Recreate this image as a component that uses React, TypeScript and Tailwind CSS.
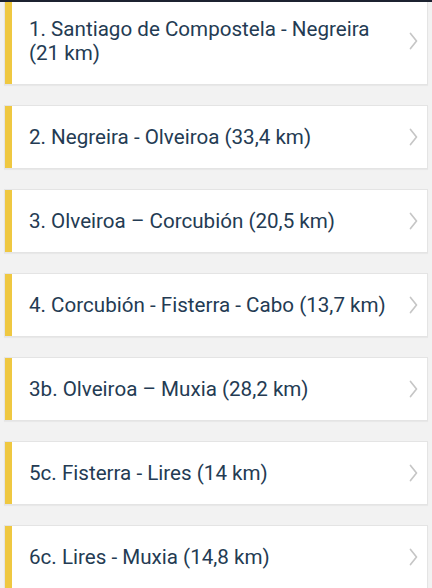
const stages = [
  "1. Santiago de Compostela - Negreira (21 km)",
  "2. Negreira - Olveiroa (33,4 km)",
  "3. Olveiroa – Corcubión (20,5 km)",
  "4. Corcubión - Fisterra - Cabo (13,7 km)",
  "3b. Olveiroa – Muxia (28,2 km)",
  "5c. Fisterra - Lires (14 km)",
  "6c. Lires - Muxia (14,8 km)",
];

function Chevron() {
  return (
    <svg width="9" height="18" viewBox="0 0 9 18" fill="none" className="shrink-0">
      <polyline
        points="1.5,1.5 7.5,9 1.5,16.5"
        stroke="#c6c6c6"
        strokeWidth="1.7"
        strokeLinecap="round"
        strokeLinejoin="round"
      />
    </svg>
  );
}

export default function App() {
  return (
    <div className="relative h-[588px] w-[432px] overflow-hidden bg-[#f2f2f2] font-['Roboto',sans-serif]">
      <div className="absolute left-0 right-0 top-0 z-10 h-[2px] bg-[#1c2230]" />
      <div className="-mt-[3px] flex flex-col gap-[20px] px-[4px]">
        {stages.map((s) => (
          <div
            key={s}
            className="flex items-stretch border border-[#e4e4e4] bg-white shadow-[0_1px_1px_rgba(0,0,0,0.04)]"
          >
            <div className="w-[7px] shrink-0 bg-[#efc841]" />
            <div className="flex flex-1 items-center justify-between py-[19px] pl-[17px] pr-[9px]">
              <span className="pr-4 text-[20.6px] leading-[24px] text-[#243b53]">{s}</span>
              <Chevron />
            </div>
          </div>
        ))}
      </div>
    </div>
  );
}
